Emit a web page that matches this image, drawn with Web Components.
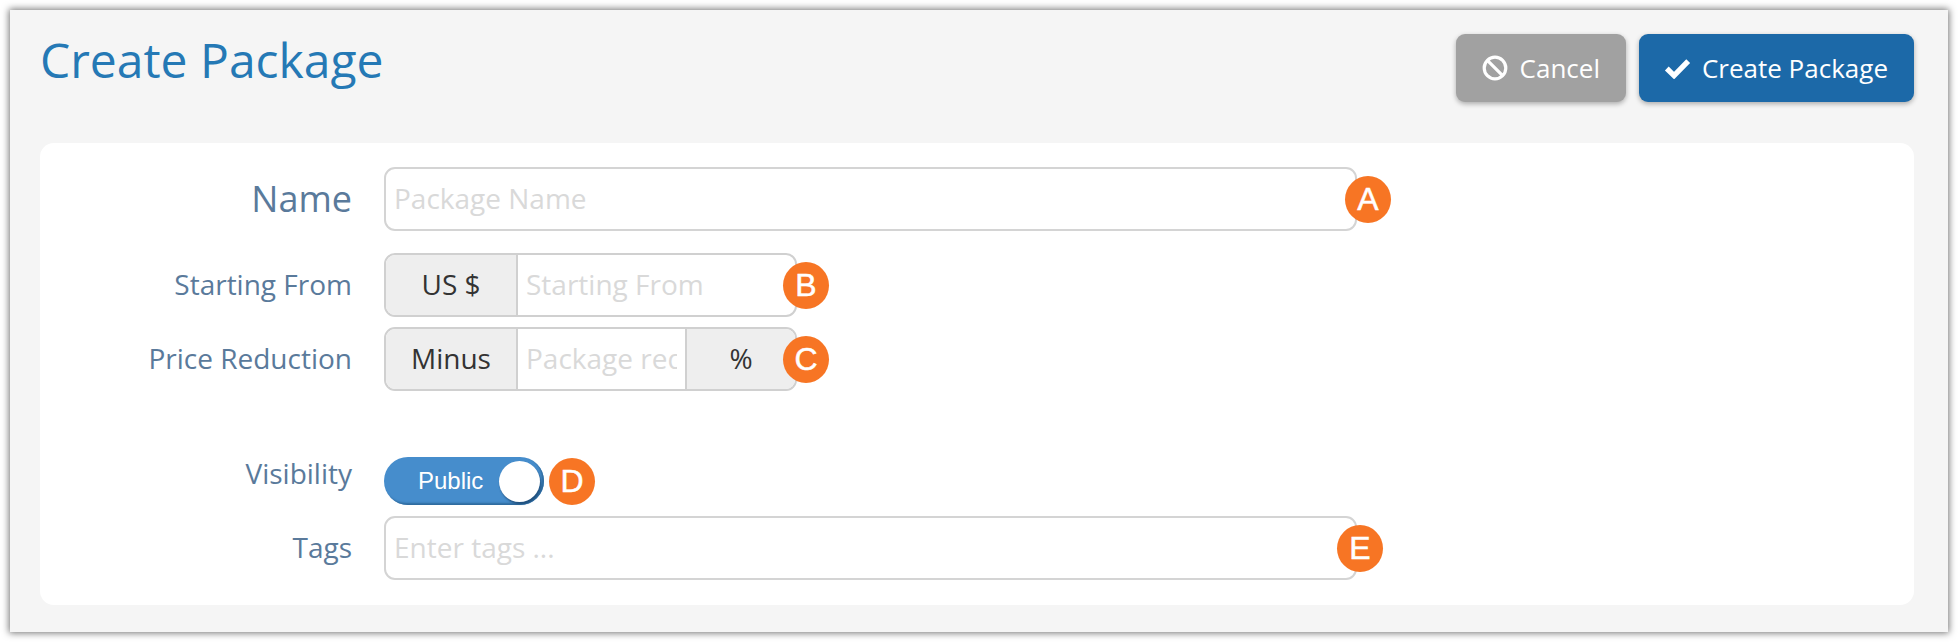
<!DOCTYPE html>
<html>
<head>
<meta charset="utf-8">
<title>Create Package</title>
<style>
  html, body { margin: 0; background: #fff; }
  body { padding: 10px; font-family: "Open Sans", "Liberation Sans", sans-serif; }
</style>
</head>
<body>
<package-window heading="Create Package">
  <action-button slot="actions" kind="cancel" icon="ban">Cancel</action-button>
  <action-button slot="actions" kind="primary" icon="check">Create Package</action-button>

  <form-row label="Name" big>
    <text-field width="973" placeholder="Package Name"></text-field>
    <note-badge overlap="-12">A</note-badge>
  </form-row>
  <form-row label="Starting From" style="margin-top:22px">
    <input-group before="US $" placeholder="Starting From"></input-group>
    <note-badge overlap="-14">B</note-badge>
  </form-row>
  <form-row label="Price Reduction" style="margin-top:10px">
    <input-group before="Minus" placeholder="Package reduction" after="%"></input-group>
    <note-badge overlap="-14">C</note-badge>
  </form-row>
  <form-row label="Visibility" label-top style="margin-top:66px">
    <toggle-switch>Public</toggle-switch>
    <note-badge overlap="5">D</note-badge>
  </form-row>
  <form-row label="Tags" style="margin-top:11px">
    <text-field width="973" placeholder="Enter tags ..."></text-field>
    <note-badge overlap="-20">E</note-badge>
  </form-row>
</package-window>

<script>
class PackageWindow extends HTMLElement {
  constructor() {
    super();
    this.shadowDOM = this.attachShadow({mode: 'open'});
  }
  connectedCallback() {
    this.shadowDOM.innerHTML = `
      <style>
        :host {
          display: block;
          width: 1938px;
          height: 622px;
          box-sizing: border-box;
          background: #f5f5f5;
          padding: 0 34px 0 30px;
          box-shadow: 0 0 7px 1px rgba(0, 0, 0, 0.55);
        }
        header {
          display: flex;
          justify-content: space-between;
          height: 133px;
          box-sizing: border-box;
          padding-top: 24px;
        }
        h1 {
          margin: -7px 0 0;
          font-size: 48px;
          font-weight: 400;
          line-height: 66px;
          color: #2579b5;
        }
        .actions {
          display: flex;
          gap: 13px;
          align-items: flex-start;
        }
        .card {
          background: #fff;
          border-radius: 14px;
          height: 462px;
          box-sizing: border-box;
          padding-top: 24px;
        }
      </style>
      <header>
        <h1>${this.getAttribute('heading')}</h1>
        <div class="actions"><slot name="actions"></slot></div>
      </header>
      <div class="card"><slot></slot></div>
    `;
  }
}

class ActionButton extends HTMLElement {
  constructor() {
    super();
    this.shadowDOM = this.attachShadow({mode: 'open'});
  }
  connectedCallback() {
    const icons = {
      ban: `<svg width="26" height="26" viewBox="0 0 26 26" fill="none" stroke="#fff" stroke-width="3.2"><circle cx="13" cy="13" r="10.8"/><path d="M5.6 5.6 20.4 20.4"/></svg>`,
      check: `<svg width="27" height="21" viewBox="0 0 28 22" fill="none" stroke="#fff" stroke-width="5.6"><path d="M2.8 11 10.4 18.4 25.2 3.2"/></svg>`
    };
    const primary = this.getAttribute('kind') === 'primary';
    this.shadowDOM.innerHTML = `
      <style>
        :host {
          display: flex;
          align-items: center;
          gap: ${primary ? 11 : 12}px;
          height: 68px;
          box-sizing: border-box;
          padding: 0 ${primary ? '26px 0 25px' : '26px'};
          border-radius: 9px;
          background: ${primary ? '#1c69a8' : '#a1a1a1'};
          color: #fff;
          font-size: 26px;
          box-shadow: 0 2px 5px rgba(0, 0, 0, 0.3);
        }
        svg { display: block; }
      </style>
      ${icons[this.getAttribute('icon')]}
      <slot></slot>
    `;
  }
}

class FormRow extends HTMLElement {
  constructor() {
    super();
    this.shadowDOM = this.attachShadow({mode: 'open'});
  }
  connectedCallback() {
    const big = this.hasAttribute('big');
    this.shadowDOM.innerHTML = `
      <style>
        :host {
          display: grid;
          grid-template-columns: 312px auto;
          column-gap: 32px;
          align-items: center;
        }
        label {
          text-align: right;
          font-size: ${big ? 36 : 28}px;
          line-height: 40px;
          color: #5a7a9b;
          margin-top: ${this.hasAttribute('label-top') ? -17 : big ? 0 : -2}px;
        }
        .control {
          display: flex;
          align-items: center;
        }
      </style>
      <label>${this.getAttribute('label')}</label>
      <div class="control"><slot></slot></div>
    `;
  }
}

class TextField extends HTMLElement {
  constructor() {
    super();
    this.shadowDOM = this.attachShadow({mode: 'open'});
  }
  connectedCallback() {
    this.shadowDOM.innerHTML = `
      <style>
        :host {
          display: flex;
          align-items: center;
          width: ${this.getAttribute('width')}px;
          height: 64px;
          box-sizing: border-box;
          border: 2px solid #d4d4d4;
          border-radius: 11px;
          padding: 0 8px 2px;
          font-size: 28px;
          color: #d9d9d9;
          background: #fff;
        }
      </style>
      <span>${this.getAttribute('placeholder')}</span>
    `;
  }
}

class InputGroup extends HTMLElement {
  constructor() {
    super();
    this.shadowDOM = this.attachShadow({mode: 'open'});
  }
  connectedCallback() {
    const after = this.getAttribute('after');
    this.shadowDOM.innerHTML = `
      <style>
        :host {
          display: flex;
          width: 413px;
          height: 64px;
          box-sizing: border-box;
          border: 2px solid #d0d0d0;
          border-radius: 11px;
          overflow: hidden;
          font-size: 28px;
          background: #fff;
        }
        .addon {
          display: flex;
          align-items: center;
          justify-content: center;
          box-sizing: border-box;
          padding-bottom: 2px;
          background: #eee;
          color: #333;
          flex: none;
        }
        .before { width: 132px; border-right: 2px solid #d0d0d0; }
        .after { width: 110px; border-left: 2px solid #d0d0d0; }
        .value {
          flex: 1;
          min-width: 0;
          display: flex;
          align-items: center;
          padding: 0 8px 2px;
        }
        .value span {
          display: block;
          width: 100%;
          overflow: hidden;
          white-space: nowrap;
          color: #d9d9d9;
        }
      </style>
      <div class="addon before">${this.getAttribute('before')}</div>
      <div class="value"><span>${this.getAttribute('placeholder')}</span></div>
      ${after ? `<div class="addon after">${after}</div>` : ''}
    `;
  }
}

class ToggleSwitch extends HTMLElement {
  constructor() {
    super();
    this.shadowDOM = this.attachShadow({mode: 'open'});
  }
  connectedCallback() {
    this.shadowDOM.innerHTML = `
      <style>
        :host {
          display: flex;
          align-items: center;
          justify-content: space-between;
          width: 160px;
          height: 48px;
          box-sizing: border-box;
          padding: 0 4px 0 34px;
          border-radius: 24px;
          background: #468dcc;
          color: #fff;
          font-family: "Liberation Sans", Arial, sans-serif;
          font-size: 24px;
          box-shadow: inset -2px -2px 2px #2f6b9e;
        }
        .knob {
          width: 41px;
          height: 41px;
          border-radius: 50%;
          background: #fff;
          box-shadow: 1px 2px 2px rgba(20, 60, 100, 0.7);
        }
      </style>
      <slot></slot>
      <div class="knob"></div>
    `;
  }
}

class NoteBadge extends HTMLElement {
  constructor() {
    super();
    this.shadowDOM = this.attachShadow({mode: 'open'});
  }
  connectedCallback() {
    this.shadowDOM.innerHTML = `
      <style>
        :host {
          display: flex;
          align-items: center;
          justify-content: center;
          position: relative;
          flex: none;
          width: 46px;
          height: 47px;
          margin-left: ${this.getAttribute('overlap')}px;
          border-radius: 50%;
          background: #f77524;
          color: #fff;
          font-family: "Liberation Sans", Arial, sans-serif;
          font-size: 32px;
          -webkit-text-stroke: 0.5px #fff;
        }
      </style>
      <slot></slot>
    `;
  }
}

customElements.define('package-window', PackageWindow);
customElements.define('action-button', ActionButton);
customElements.define('form-row', FormRow);
customElements.define('text-field', TextField);
customElements.define('input-group', InputGroup);
customElements.define('toggle-switch', ToggleSwitch);
customElements.define('note-badge', NoteBadge);
</script>
</body>
</html>
